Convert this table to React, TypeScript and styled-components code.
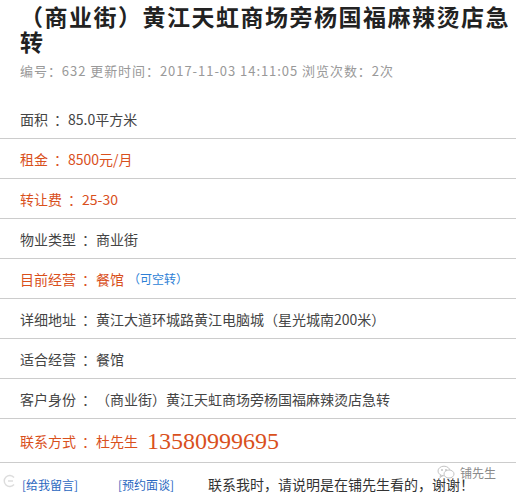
import React from "react";
import styled, { createGlobalStyle } from "styled-components";

const Global = createGlobalStyle`
  html, body { margin: 0; padding: 0; background: #fff; }
  body { font-family: "Noto Sans CJK SC", "Noto Sans", sans-serif; color: #444; }
`;

const Page = styled.div`
  position: relative;
  width: 516px;
  height: 499px;
  overflow: hidden;
  background: #fff;
`;

const Header = styled.header`
  padding: 4px 0 0 20px;
  height: 99px;
  box-sizing: border-box;
`;

const Title = styled.h1`
  margin: 0;
  font-size: 23px;
  line-height: 25px;
  letter-spacing: 1.5px;
  font-weight: 700;
  color: #222;
`;

const Meta = styled.div`
  margin-top: 9px;
  font-size: 13px;
  line-height: 16px;
  letter-spacing: 0.95px;
  color: #999;
`;

const List = styled.ul`
  list-style: none;
  margin: 0;
  padding: 0;
`;

const Row = styled.li<{ $tall?: boolean; $accent?: boolean }>`
  display: flex;
  align-items: center;
  height: ${(p) => (p.$tall ? 43 : 39)}px;
  padding-left: 20px;
  border-bottom: 1px solid #cccccc;
  font-size: 14px;
  white-space: nowrap;
  color: ${(p) => (p.$accent ? "#d9501c" : "#444")};
`;

const Colon = styled.span`
  display: inline-block;
  width: 14px;
  margin-left: 6px;
`;

const Note = styled.span`
  margin-left: 4px;
  font-size: 12px;
  color: #2d7fd6;
`;

const Phone = styled.span`
  margin-left: 9px;
  font-family: "Liberation Serif", serif;
  font-size: 24px;
  color: #d9501c;
  line-height: 1;
`;

const Footer = styled.div`
  display: grid;
  grid-template-columns: 96px 90px auto;
  align-items: center;
  height: 42px;
  padding-left: 22px;
`;

const FootLink = styled.a`
  font-size: 12px;
  color: #2a67bf;
  text-decoration: none;
`;

const Notice = styled.span`
  font-size: 14px;
  color: #333;
`;

const Watermark = styled.div`
  position: absolute;
  right: 20px;
  bottom: 18px;
  display: flex;
  align-items: center;
  gap: 5px;
  font-size: 12px;
  color: #8a8a8a;
  text-shadow: 0 0 2px #fff, 0 0 1px #fff;
`;

const LeftMark = styled.div`
  position: absolute;
  left: 2px;
  bottom: 6px;
  opacity: 0.5;
`;

type Item = { label: string; value: string; accent?: boolean; note?: string; phone?: string; tall?: boolean };

const items: Item[] = [
  { label: "面积", value: "85.0平方米" },
  { label: "租金", value: "8500元/月", accent: true },
  { label: "转让费", value: "25-30", accent: true },
  { label: "物业类型", value: "商业街" },
  { label: "目前经营", value: "餐馆", accent: true, note: "（可空转）" },
  { label: "详细地址", value: "黄江大道环城路黄江电脑城（星光城南200米）" },
  { label: "适合经营", value: "餐馆" },
  { label: "客户身份", value: "（商业街）黄江天虹商场旁杨国福麻辣烫店急转" },
  { label: "联系方式", value: "杜先生", accent: true, phone: "13580999695", tall: true },
];

export default function App() {
  return (
    <Page>
      <Global />
      <Header>
        <Title>（商业街）黄江天虹商场旁杨国福麻辣烫店急转</Title>
        <Meta>编号：632 更新时间：2017-11-03 14:11:05 浏览次数：2次</Meta>
      </Header>
      <List>
        {items.map((it) => (
          <Row key={it.label} $tall={it.tall} $accent={it.accent}>
            <span>{it.label}</span>
            <Colon>：</Colon>
            <span>{it.value}</span>
            {it.note && <Note>{it.note}</Note>}
            {it.phone && <Phone>{it.phone}</Phone>}
          </Row>
        ))}
      </List>
      <Footer>
        <FootLink href="#">[给我留言]</FootLink>
        <FootLink href="#">[预约面谈]</FootLink>
        <Notice>联系我时，请说明是在铺先生看的，谢谢！</Notice>
      </Footer>
      <LeftMark>
        <svg width="18" height="14" viewBox="0 0 18 14" fill="none" stroke="#bbb" strokeWidth="1.4">
          <path d="M12 3.5 A5.5 5.5 0 1 0 12 10.5" />
          <path d="M6 7 h5" />
        </svg>
      </LeftMark>
      <Watermark>
        <svg width="18" height="15" viewBox="0 0 18 15" fill="none" stroke="#c4c4c4" strokeWidth="1">
          <ellipse cx="7" cy="6" rx="6" ry="4.8" />
          <path d="M3.5 10 L3 12.5 L6 10.6" />
          <ellipse cx="12" cy="9" rx="5" ry="4" fill="#fff" />
          <circle cx="5" cy="5" r="0.6" fill="#c4c4c4" />
          <circle cx="9" cy="5" r="0.6" fill="#c4c4c4" />
        </svg>
        <span>铺先生</span>
      </Watermark>
    </Page>
  );
}
